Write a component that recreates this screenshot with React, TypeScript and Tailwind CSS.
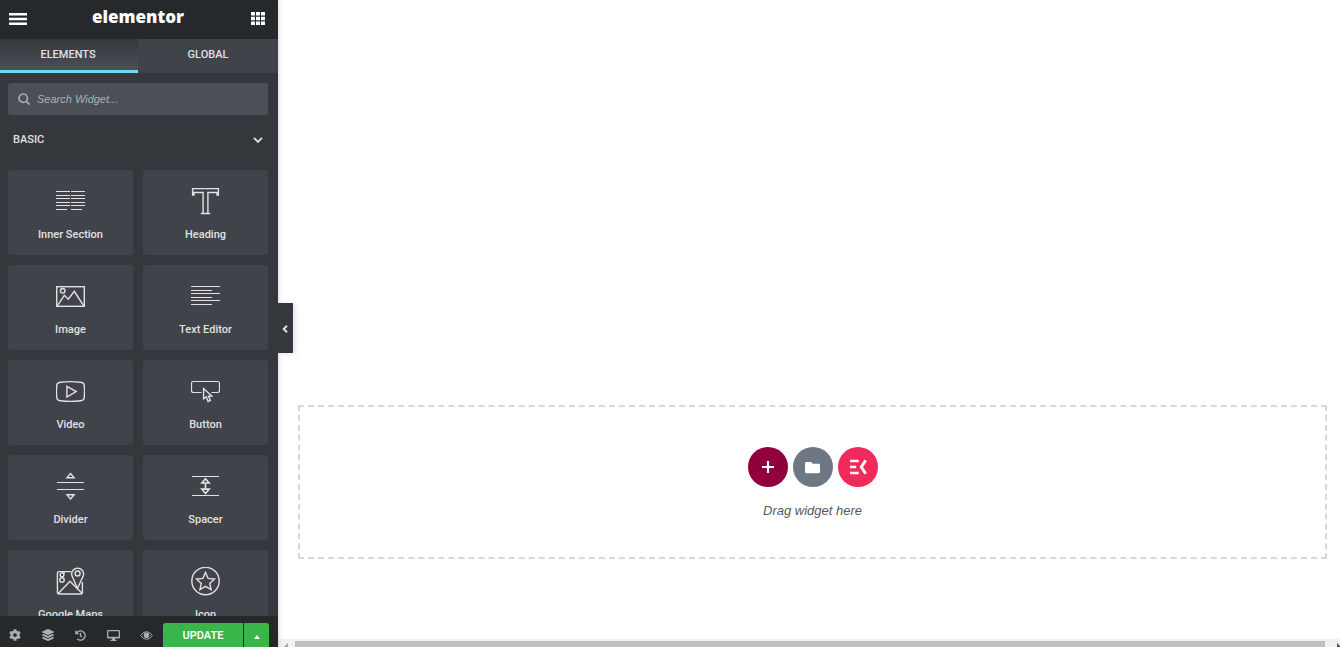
import type { ReactNode } from 'react';
import { FaCog, FaLayerGroup, FaHistory, FaFolder } from 'react-icons/fa';

function Lines({ rows }: { rows: [number, number, number][] }) {
  return (
    <g fill="currentColor" stroke="none">
      {rows.map(([x, y, w]) => (
        <rect key={`${x}-${y}`} x={x} y={y} width={w} height="1" />
      ))}
    </g>
  );
}

const widgets: { name: string; icon: ReactNode }[] = [
  {
    name: 'Inner Section',
    icon: (
      <Lines
        rows={[
          [0, 4, 14], [0, 8, 14], [0, 11, 14], [0, 15, 14], [0, 18, 14], [0, 22, 11],
          [15, 4, 14], [15, 8, 14], [15, 11, 14], [15, 15, 14], [15, 18, 14], [15, 22, 11],
        ]}
      />
    ),
  },
  {
    name: 'Heading',
    icon: <path d="M1.600 1.600h25.800v6.400h-1.400V5.500h-9.100v21h2.300H9.800h2.300v-21H3v2.500H1.600z" />,
  },
  {
    name: 'Image',
    icon: (
      <>
        <rect x=".7" y="4.700" width="27.600" height="19.600" />
        <circle cx="6.700" cy="8.800" r="2.300" />
        <path d="M1.300 23.800 8.300 13.300l4 3.900 6-7.900 9.400 14.500" />
      </>
    ),
  },
  {
    name: 'Text Editor',
    icon: <Lines rows={[[0, 4, 29], [0, 8, 21], [0, 11, 29], [0, 15, 21], [0, 18, 29], [0, 22, 21]]} />,
  },
  {
    name: 'Video',
    icon: (
      <>
        <path d="M4.500 5.200q10-1.200 20 0 3.700.4 3.800 3.600.4 5.700 0 11.400-.1 3.200-3.800 3.600-10 1.200-20 0Q.8 23.400.7 20.200.3 14.500.7 8.800.8 5.600 4.500 5.200z" />
        <path d="m10.900 9.300 9.300 5.300-9.300 5.400z" />
      </>
    ),
  },
  {
    name: 'Button',
    icon: (
      <>
        <path d="M10.500 15.500H2.500q-2 0-2-2v-7q0-2 2-2h24q2 0 2 2v7q0 2-2 2h-6" strokeWidth="1.200" />
        <path d="M12.600 11.500v10.300l2.600-2 1.900 4.700 2.300-1-1.900-4.400h3.300z" />
      </>
    ),
  },
  {
    name: 'Divider',
    icon: (
      <>
        <Lines rows={[[1, 10, 27], [1, 17, 27]]} />
        <path d="m14.500 1.500 3.600 4.200h-7.200zM14.500 27l3.600-4.300h-7.200z" />
      </>
    ),
  },
  {
    name: 'Spacer',
    icon: (
      <>
        <Lines rows={[[1, 4, 27], [1, 23, 27]]} />
        <path d="m14.500 6.800 3.600 4.200h-7.200zM14.500 21.500l3.600-4.300h-7.200zM14.500 11v6" strokeWidth="1.700" />
      </>
    ),
  },
  {
    name: 'Google Maps',
    icon: (
      <>
        <path d="M15 4.600H3.200q-1.800 0-1.800 1.800v18.800q0 1.800 1.800 1.800h21.400q1.800 0 1.800-1.800V15M2.500 26.300 14 14.300l12 12" />
        <path d="M21.500 21.500 16.400 9.800a5.900 5.900 0 1 1 10.400 0z" />
        <circle cx="21.600" cy="6.500" r="2.500" />
        <circle cx="6" cy="7.800" r="1.900" />
        <circle cx="6" cy="13" r="2.200" />
        <path d="M6.500 6h2.500" />
      </>
    ),
  },
  {
    name: 'Icon',
    icon: (
      <>
        <circle cx="14.500" cy="14" r="13.700" />
        <path d="m14.500 5.500 2.600 5.900 6.400.7-4.800 4.300 1.400 6.300-5.600-3.300-5.600 3.300 1.400-6.300-4.800-4.300 6.400-.7z" />
      </>
    ),
  },
];

function ToolButton({ label, children }: { label: string; children: ReactNode }) {
  return (
    <button type="button" aria-label={label} className="flex w-[33px] items-center justify-center text-xs text-[#a4afb7]">
      {children}
    </button>
  );
}

function Sidebar() {
  return (
    <aside className="relative z-10 flex h-full w-[278px] shrink-0 flex-col bg-[#34383c] text-[#e0e1e3] shadow-[0_0_6px_rgba(0,0,0,0.2)]">
      <header className="flex h-[39px] shrink-0 items-center justify-between bg-[#26292c] pr-2.5 pb-0.5 pl-2 text-white">
        <button type="button" aria-label="Menu" className="flex w-5 justify-center">
          <svg width="18" height="12" viewBox="0 0 18 12" fill="currentColor">
            <path d="M0 0h18v2.400H0zM0 4.800h18v2.400H0zM0 9.600h18V12H0z" />
          </svg>
        </button>
        <span className="pb-1 font-['Open_Sans',sans-serif] text-[17px] leading-5 font-extrabold">elementor</span>
        <button type="button" aria-label="Widgets panel" className="flex w-5 justify-center">
          <svg width="14" height="13" viewBox="0 0 14 13" fill="currentColor">
            <path d="M0 0h4v3.500H0zM5 0h4v3.500H5zM10 0h4v3.500h-4zM0 4.700h4v3.600H0zM5 4.700h4v3.600H5zM10 4.700h4v3.600h-4zM0 9.500h4V13H0zM5 9.500h4V13H5zM10 9.500h4V13h-4z" />
          </svg>
        </button>
      </header>

      <nav className="flex h-[34px] shrink-0 bg-[#404349] text-[11px] font-medium">
        <button type="button" className="w-[138px] border-b-3 border-[#71d7f7] bg-linear-to-b from-[#34383c] to-[#4c4f56] pt-px pr-0.5">
          ELEMENTS
        </button>
        <button type="button" className="flex-1 border-b-3 border-transparent pt-px">
          GLOBAL
        </button>
      </nav>

      <div className="min-h-0 flex-1 overflow-hidden pt-2.5 pr-2.5 pl-2">
        <label className="flex h-8 items-center gap-[7px] rounded-[3px] bg-[#4c4f56] px-2.5 text-[#a4afb7]">
          <svg width="12" height="12" viewBox="0 0 12 12" fill="none" stroke="currentColor" strokeWidth="1.700">
            <circle cx="5.200" cy="5.200" r="4.200" />
            <path d="m8.300 8.300 3.200 3.200" />
          </svg>
          <input
            type="text"
            aria-label="Search Widget"
            placeholder="Search Widget..."
            className="min-w-0 flex-1 bg-transparent font-['Liberation_Sans',sans-serif] text-[11px] italic outline-none placeholder:text-[#a9b1b8]"
          />
        </label>

        <button type="button" className="flex h-[50px] w-full items-center justify-between px-[5px] text-[11px] font-medium">
          BASIC
          <svg width="10" height="6" viewBox="0 0 10 6" fill="none" stroke="currentColor" strokeWidth="1.900">
            <path d="m1 .8 4 4 4-4" />
          </svg>
        </button>

        <div className="grid grid-cols-2 gap-2.5 pt-[5px]">
          {widgets.map((w) => (
            <button
              key={w.name}
              type="button"
              className="flex h-[85px] flex-col items-center gap-[11px] rounded-[3px] bg-[#404349] pt-[17px] text-[11px] leading-4 font-medium"
            >
              <svg width="29" height="29" viewBox="0 0 29 29" fill="none" stroke="currentColor" strokeWidth="1.400" className="shrink-0">
                {w.icon}
              </svg>
              {w.name}
            </button>
          ))}
        </div>
      </div>

      <footer className="flex h-[31px] shrink-0 bg-[#26292c] pt-[7px] pr-[9px]">
        <div className="-ml-0.5 flex flex-1">
          <ToolButton label="Settings"><FaCog /></ToolButton>
          <ToolButton label="Navigator"><FaLayerGroup /></ToolButton>
          <ToolButton label="History"><FaHistory size={11} /></ToolButton>
          <ToolButton label="Responsive mode">
            <svg width="13" height="11" viewBox="0 0 13 11" fill="currentColor">
              <path fillRule="evenodd" d="M1 0h11q1 0 1 1v6.500q0 1-1 1H8l.4 1.500h1.100v1h-6v-1h1.100L5 8.500H1q-1 0-1-1V1q0-1 1-1zm.3 1.200v5.600h10.400V1.200z" />
            </svg>
          </ToolButton>
          <ToolButton label="Preview changes">
            <svg width="13" height="9" viewBox="0 0 13 9" fill="none" stroke="currentColor">
              <path d="M.7 4.500Q3 .7 6.500.7t5.800 3.800Q10 8.300 6.500 8.300T.7 4.500z" />
              <circle cx="6.500" cy="4.200" r="2.800" fill="currentColor" stroke="none" />
            </svg>
          </ToolButton>
        </div>
        <div className="flex gap-px text-white">
          <button type="button" className="w-20 rounded-tl-[3px] bg-[#39b54a] pt-[3px] text-[11px] font-semibold">UPDATE</button>
          <button type="button" aria-label="Save options" className="flex w-[25px] items-center justify-center rounded-tr-[3px] bg-[#39b54a] pt-[3px]">
            <svg width="6" height="4" viewBox="0 0 6 4" fill="currentColor"><path d="M3 0l3 4H0z" /></svg>
          </button>
        </div>
      </footer>

      <button
        type="button"
        aria-label="Hide panel"
        className="absolute top-[303px] left-full flex h-[50px] w-[15px] items-center justify-center bg-[#34383c] pt-0.5 pr-px shadow-[3px_1px_5px_rgba(0,0,0,0.1)]"
      >
        <svg width="6" height="8" viewBox="0 0 6 8" fill="none" stroke="currentColor" strokeWidth="1.900">
          <path d="M5 .8 1.700 4 5 7.200" />
        </svg>
      </button>
    </aside>
  );
}

export default function App() {
  return (
    <div className="flex h-screen overflow-hidden bg-white font-[Roboto,sans-serif]">
      <Sidebar />
      <main className="flex min-w-0 flex-1 flex-col justify-end">
        <section className="mr-[13px] mb-20 ml-5 flex h-[154px] flex-col items-center gap-[15px] border-2 border-dashed border-[#d5d8dc] pt-10">
          <div className="flex gap-[5px] text-white">
            <button type="button" aria-label="Add new section" className="flex size-10 items-center justify-center rounded-full bg-[#92003b]">
              <svg width="12" height="12" viewBox="0 0 12 12" fill="currentColor"><path d="M4.900 0h2.200v4.900H12v2.200H7.100V12H4.900V7.100H0V4.900h4.900z" /></svg>
            </button>
            <button type="button" aria-label="Add template" className="flex size-10 items-center justify-center rounded-full bg-[#6d7882]">
              <FaFolder size={15} />
            </button>
            <button type="button" aria-label="ElementsKit" className="flex size-10 items-center justify-center rounded-full bg-[#f2295b]">
              <svg width="18" height="16" viewBox="0 0 18 16" fill="none" stroke="currentColor" strokeWidth="2.700">
                <path d="M1 2h8.700M1 8h6.200M1 14h8.700" />
                <path d="M16.700 1.300 12.300 8l4.400 6.700" strokeWidth="2.900" />
              </svg>
            </button>
          </div>
          <p className="font-['Liberation_Sans',sans-serif] text-[13px] leading-[18px] text-[#54595f] italic">Drag widget here</p>
        </section>
        <div className="flex h-2 shrink-0 items-end bg-[#f1f1f1]">
          <div className="flex w-[17px] items-end justify-end pr-[7px]">
            <svg width="4" height="4" viewBox="0 0 4 4" fill="#a3a3a3"><path d="M4 0v4H0z" /></svg>
          </div>
          <div className="h-1.5 flex-1 bg-[#c1c1c1]" />
          <div className="flex w-[15px] items-end justify-end">
            <svg width="3" height="4" viewBox="0 0 3 4" fill="#505050"><path d="M0 0l3 3v1H0z" /></svg>
          </div>
        </div>
      </main>
    </div>
  );
}
